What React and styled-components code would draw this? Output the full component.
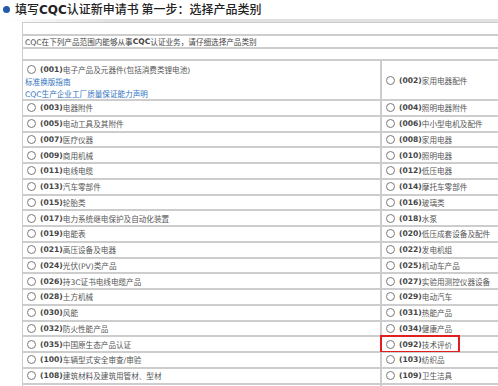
import React from "react";
import styled, { createGlobalStyle } from "styled-components";

const GlobalStyle = createGlobalStyle`
  html, body {
    margin: 0;
    padding: 0;
    background: #fff;
    overflow: hidden;
  }
  body {
    font-family: "DejaVu Sans", "Noto Sans CJK SC", sans-serif;
    color: #444;
  }
`;

const Page = styled.div`
  width: 540px;
`;

const Header = styled.div`
  display: flex;
  align-items: center;
  height: 19px;
  padding-left: 3px;
  gap: 5px;
`;

const Bullet = styled.span`
  width: 7px;
  height: 7px;
  border-radius: 50%;
  background: #2259a8;
  flex-shrink: 0;
`;

const Title = styled.h1`
  margin: 0;
  font-family: "Noto Sans CJK SC", sans-serif;
  font-size: 12px;
  font-weight: 500;
  color: #222;
  line-height: 19px;
  b {
    font-family: "DejaVu Sans", sans-serif;
    font-weight: 700;
  }
`;

const Rule = styled.div`
  height: 3px;
  margin-left: 8px;
  background: linear-gradient(to right, #fff 0%, #e0e0e0 20%, #e2e2e2 100%);
`;

const Grid = styled.div`
  display: grid;
  grid-template-columns: 359px 160px;
  margin-left: 22px;
  font-size: 7.6px;
`;

const Cell = styled.div`
  box-sizing: border-box;
  border: 1px solid #cdcdcd;
  grid-column: ${(p) => (p.$wide ? "1 / span 2" : "auto")};
  height: ${(p) => p.$h}px;
  padding: 0 2px;
  display: flex;
  flex-direction: column;
  justify-content: ${(p) => (p.$top ? "flex-start" : "center")};
  padding-top: ${(p) => (p.$top ? "2px" : "0")};
  white-space: nowrap;
`;

const Line = styled.div`
  display: flex;
  align-items: center;
  height: 12px;
  color: ${(p) => (p.$link ? "#2f72bf" : "#444")};
  b {
    font-weight: 700;
  }
`;

const Option = styled.label`
  display: inline-flex;
  align-items: center;
  align-self: flex-start;
  height: 12px;
  ${(p) =>
    p.$mark &&
    `
    outline: 2px solid #e02020;
    outline-offset: 1px;
    padding: 0 5px 0 1px;
    margin-left: -1px;
  `}
`;

const Radio = styled.input.attrs({ type: "radio", name: "cat" })`
  appearance: none;
  box-sizing: border-box;
  width: 9px;
  height: 9px;
  margin: 0 4px 0 2px;
  border: 1px solid #7a7a7a;
  border-radius: 50%;
  background: #fff;
`;

const Code = styled.b`
  color: #444;
  font-weight: 700;
`;

const Label = styled.span`
  color: #555;
`;

const rows = [
  [["003", "电器附件"], ["004", "照明电器附件"]],
  [["005", "电动工具及其附件"], ["006", "中小型电机及配件"]],
  [["007", "医疗仪器"], ["008", "家用电器"]],
  [["009", "商用机械"], ["010", "照明电器"]],
  [["011", "电线电缆"], ["012", "低压电器"]],
  [["013", "汽车零部件"], ["014", "摩托车零部件"]],
  [["015", "轮胎类"], ["016", "玻璃类"]],
  [["017", "电力系统继电保护及自动化装置"], ["018", "水泵"]],
  [["019", "电能表"], ["020", "低压成套设备及配件"]],
  [["021", "高压设备及电器"], ["022", "发电机组"]],
  [["024", "光伏(PV)类产品"], ["025", "机动车产品"]],
  [["026", "持3C证书电线电缆产品"], ["027", "实验用测控仪器设备"]],
  [["028", "土方机械"], ["029", "电动汽车"]],
  [["030", "风能"], ["031", "热能产品"]],
  [["032", "防火性能产品"], ["034", "健康产品"]],
  [["035", "中国原生态产品认证"], ["092", "技术评价"]],
  [["100", "车辆型式安全审查/审验"], ["103", "纺织品"]],
  [["108", "建筑材料及建筑用管材、型材"], ["109", "卫生洁具"]],
];

const Item = ({ code, label, mark }) => (
  <Option $mark={mark}>
    <Radio value={code} />
    <Code>({code})</Code>
    <Label>{label}</Label>
  </Option>
);

const App = () => (
  <Page>
    <GlobalStyle />
    <Header>
      <Bullet />
      <Title>
        填写<b>CQC</b>认证新申请书 第一步：选择产品类别
      </Title>
    </Header>
    <Rule />
    <Grid>
      <Cell $wide $h={13} />
      <Cell $wide $h={13}>
        <Line>
          CQC在下列产品范围内能够从事<b>CQC</b>认证业务，请仔细选择产品类别
        </Line>
      </Cell>
      <Cell $wide $h={12} />
      <Cell $h={40} $top>
        <Item code="001" label="电子产品及元器件(包括消费类锂电池)" />
        <Line $link>标准换版指南</Line>
        <Line $link>CQC生产企业工厂质量保证能力声明</Line>
      </Cell>
      <Cell $h={40}>
        <Item code="002" label="家用电器配件" />
      </Cell>
      {rows.map(([l, r]) => (
        <React.Fragment key={l[0]}>
          <Cell $h={15.76}>
            <Item code={l[0]} label={l[1]} />
          </Cell>
          <Cell $h={15.76}>
            <Item code={r[0]} label={r[1]} mark={r[0] === "092"} />
          </Cell>
        </React.Fragment>
      ))}
      <Cell $h={15.76} />
      <Cell $h={15.76} />
    </Grid>
  </Page>
);

export default App;
